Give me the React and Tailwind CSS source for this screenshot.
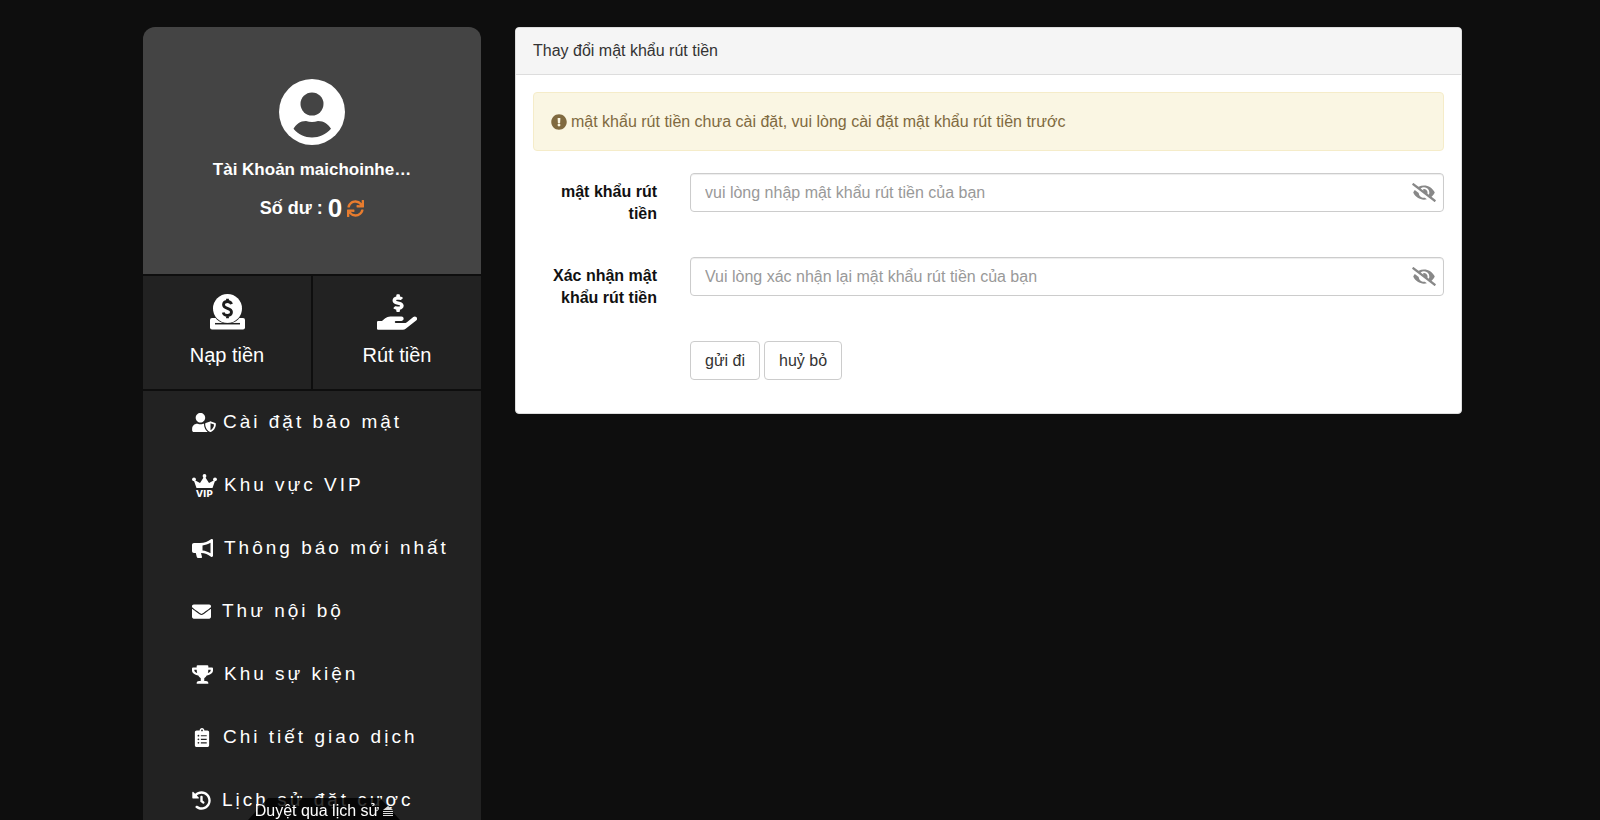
import { FaUserShield, FaEnvelope, FaTrophy, FaClipboardList, FaHistory, FaExclamationCircle, FaEyeSlash, FaSync, FaHandHoldingUsd } from "react-icons/fa";

function Avatar() {
  return (
    <svg viewBox="0 0 66 66" className="h-[66px] w-[66px]" aria-hidden="true">
      <circle cx="33" cy="33" r="33" fill="#fff" />
      <circle cx="33" cy="25" r="11.5" fill="#444" />
      <path d="M14.500 49.800C17 45.500 21 42 27 42C31 43.300 35 43.300 39 42C45 42 49.500 45.500 52 49.800C47 55.500 40 58.500 33 58.500S19 55.500 14.500 49.800Z" fill="#444" />
    </svg>
  );
}

function DepositIcon() {
  return (
    <svg viewBox="0 0 35 36" className="h-9 w-[35px]" aria-hidden="true">
      <rect x="0" y="24" width="35" height="11.500" rx="2" fill="#fff" />
      <circle cx="17.500" cy="14.500" r="15.300" fill="#222" />
      <circle cx="17.500" cy="14.500" r="14.500" fill="#fff" />
      <path d="M5 29.700H30" stroke="#222" strokeWidth="1.500" />
      <path d="M21.500 10.200C20.800 8 19.300 7.500 17.500 7.500C15.200 7.500 13.500 8.700 13.500 10.800C13.500 15.600 21.500 13.200 21.500 18.100C21.500 20.300 19.700 21.400 17.500 21.400C15.200 21.400 13.700 20.500 13.200 18.500M17.500 4.800V8M17.500 21V24.300" fill="none" stroke="#1c1c1c" strokeWidth="2.800" />
    </svg>
  );
}

function VipIcon() {
  return (
    <svg viewBox="0 0 25 23" className="h-[23px] w-[25px] tracking-normal" fill="#fff" aria-hidden="true">
      <path d="M4.500 14L1.500 5.500L8 9L12.500 2L17 9L23.500 5.500L20.500 14Z" />
      <circle cx="2" cy="5.300" r="1.900" />
      <circle cx="12.500" cy="2" r="1.900" />
      <circle cx="23" cy="5.300" r="1.900" />
      <text x="12.500" y="22.500" textAnchor="middle" fontSize="9" fontWeight="700" fontFamily="DejaVu Sans, sans-serif">VIP</text>
    </svg>
  );
}

function MegaphoneIcon() {
  return (
    <svg viewBox="0 0 21 19" className="h-[19px] w-[21px]" fill="#fff" aria-hidden="true">
      <path fillRule="evenodd" d="M2 4H8C12.500 4 16 2.500 19 0.300C20 -0.200 21 0.300 21 1.200V16.800C21 17.800 20 18.200 19 17.700C16 15.500 13 14 9 14L10 18C10.200 18.700 9.800 19 9.200 19H6C5.400 19 5 18.700 4.800 18L3.800 14H2C0.800 14 0 13.200 0 12V6C0 4.800 0.800 4 2 4ZM18.500 3.800C16 5.300 13.300 6.200 10.500 6.500V11.500C13.300 11.800 16 12.700 18.500 14.200Z" />
    </svg>
  );
}

const menu = [
  { label: "Cài đặt bảo mật", icon: <FaUserShield className="h-[19px] w-[24px]" />, gap: "gap-[7px]" },
  { label: "Khu vực VIP", icon: <VipIcon />, gap: "gap-[7px]" },
  { label: "Thông báo mới nhất", icon: <MegaphoneIcon />, gap: "gap-[11px]" },
  { label: "Thư nội bộ", icon: <FaEnvelope className="h-[19px] w-[19px]" />, gap: "gap-[11px]" },
  { label: "Khu sự kiện", icon: <FaTrophy className="h-[19px] w-[21px]" />, gap: "gap-[11px]" },
  { label: "Chi tiết giao dịch", icon: <FaClipboardList className="h-[19px] w-[20px]" />, gap: "gap-[11px]" },
  { label: "Lịch sử đặt cược", icon: <FaHistory className="h-[19px] w-[19px]" />, gap: "gap-[11px]" },
];

function PasswordRow({ id, label, placeholder }) {
  return (
    <div className="flex gap-[33px]">
      <label htmlFor={id} className="w-[124px] shrink-0 pt-2 text-right text-base leading-[22px] font-bold text-[#111]">
        {label}
      </label>
      <div className="relative h-[39px] flex-1">
        <input
          id={id}
          type="password"
          placeholder={placeholder}
          className="h-full w-full rounded border border-[#ccc] bg-white pr-12 pl-[14px] text-base text-[#555] shadow-[inset_0_1px_1px_rgba(0,0,0,0.075)] outline-none placeholder:text-[#999]"
        />
        <button type="button" aria-label="Hiện mật khẩu" className="absolute top-[10px] right-2 text-[#888]">
          <FaEyeSlash className="h-[19px] w-[24px]" />
        </button>
      </div>
    </div>
  );
}

export default function App() {
  return (
    <div className="h-screen overflow-hidden bg-[#0e0e0e] pt-[27px] pr-[138px] pl-[143px] font-['Liberation_Sans',Arial,sans-serif]">
      <div className="flex items-start gap-[34px]">
        <aside className="w-[338px] shrink-0">
          <section className="flex h-[247px] flex-col items-center rounded-t-xl bg-[#444] pt-[52px] text-white">
            <Avatar />
            <p className="mt-3 text-[17px] leading-[26px] font-bold">Tài Khoản maichoinhe…</p>
            <div className="mt-2 flex items-center gap-[5px] text-lg leading-[34px] font-bold">
              <span>Số dư :</span>
              <span className="text-[26px] leading-[34px]">0</span>
              <button type="button" aria-label="Làm mới số dư" className="text-[#e87c2e]">
                <FaSync className="h-[17px] w-[17px]" />
              </button>
            </div>
          </section>
          <nav className="mt-0.5 grid grid-cols-2 gap-0.5 text-xl text-white">
            <a href="#deposit" className="flex h-[113px] flex-col items-center bg-[#222] pt-[18px]">
              <DepositIcon />
              <span className="mt-[11px] leading-7">Nạp tiền</span>
            </a>
            <a href="#withdraw" className="flex h-[113px] flex-col items-center bg-[#222] pt-[18px]">
              <FaHandHoldingUsd className="h-9 w-[40px]" />
              <span className="mt-[11px] leading-7">Rút tiền</span>
            </a>
          </nav>
          <nav className="mt-0.5 bg-[#222]">
            <ul>
              {menu.map((item) => (
                <li key={item.label}>
                  <a href="#menu" className={`flex h-[63px] items-center pl-[49px] text-[19px] tracking-[3px] text-white ${item.gap}`}>
                    {item.icon}
                    <span className="whitespace-nowrap">{item.label}</span>
                  </a>
                </li>
              ))}
            </ul>
          </nav>
        </aside>

        <main className="min-w-0 flex-1 overflow-hidden rounded border border-[#ddd] bg-white pb-[33px]">
          <h1 className="h-[47px] border-b border-[#ddd] bg-[#f5f5f5] px-[17px] text-base leading-[46px] text-[#333]">
            Thay đổi mật khẩu rút tiền
          </h1>
          <div className="px-[17px] pt-[17px]">
            <p role="alert" className="flex h-[59px] items-center gap-1 rounded border border-[#f5ecc9] bg-[#faf6e3] px-[17px] text-base text-[#806a40]">
              <FaExclamationCircle className="h-4 w-4" />
              mật khẩu rút tiền chưa cài đặt, vui lòng cài đặt mật khẩu rút tiền trước
            </p>
            <form className="mt-[22px] flex flex-col gap-8">
              <PasswordRow id="pw" label="mật khẩu rút tiền" placeholder="vui lòng nhập mật khẩu rút tiền của bạn" />
              <PasswordRow id="pw2" label="Xác nhận mật khẩu rút tiền" placeholder="Vui lòng xác nhận lại mật khẩu rút tiền của bạn" />
              <div className="flex gap-1 pl-[157px]">
                <button type="submit" className="h-[39px] rounded border border-[#ccc] bg-white px-[14px] text-base text-[#333]">gửi đi</button>
                <button type="button" className="h-[39px] rounded border border-[#ccc] bg-white px-[14px] text-base text-[#333]">huỷ bỏ</button>
              </div>
            </form>
          </div>
        </main>
      </div>

      <a href="#history" className="fixed bottom-0 left-[248px] flex h-[22px] w-[152px] items-end justify-center gap-1 text-base leading-[18px] whitespace-nowrap text-white">
        <svg viewBox="0 0 152 22" className="absolute inset-0 h-full w-full" preserveAspectRatio="none" aria-hidden="true">
          <path d="M20 0H132L152 22H0Z" fill="#000" fillOpacity="0.8" />
        </svg>
        <span className="relative">Duyệt qua lịch sử</span>
        <svg viewBox="0 0 10 10" className="relative mb-1 h-[10px] w-[10px]" fill="#ddd" aria-hidden="true">
          <path d="M5 0L10 4H0ZM0 5H10V6H0ZM0 7H10V8H0ZM0 9H10V10H0Z" />
        </svg>
      </a>
    </div>
  );
}
